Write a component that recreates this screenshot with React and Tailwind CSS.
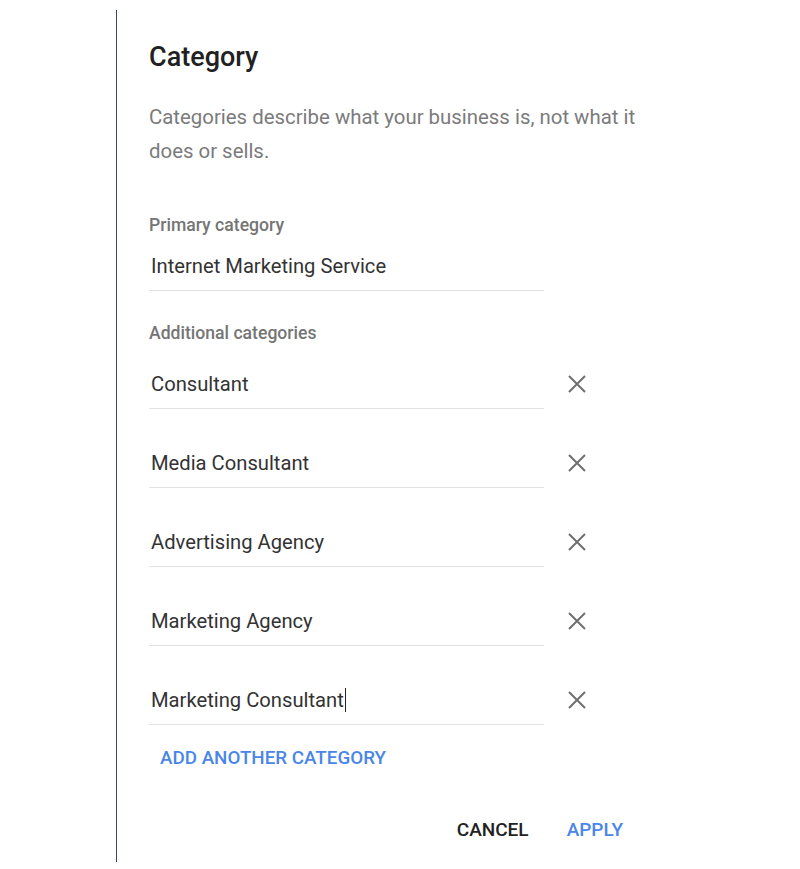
import React from "react";

function XIcon() {
  return (
    <svg width="20" height="20" viewBox="0 0 20 20" className="block">
      <path d="M2 2 L18 18 M18 2 L2 18" stroke="#6f6f6f" strokeWidth="2" fill="none" />
    </svg>
  );
}

function Row({ text, cursor, first }) {
  return (
    <div className={`flex items-start ${first ? "mt-[29px]" : "mt-[42px]"}`}>
      <div className="w-[395px] border-b border-[#e2e2e2] pb-[12px] pl-[2px]">
        <div className="text-[20.2px] leading-[24px] text-[#333] flex items-center">
          {text}
          {cursor && <span className="inline-block w-[1px] h-[24px] bg-[#222] ml-[1px]" />}
        </div>
      </div>
      <div className="ml-[23px] mt-[2px]">
        <XIcon />
      </div>
    </div>
  );
}

export default function App() {
  const rows = ["Consultant", "Media Consultant", "Advertising Agency", "Marketing Agency", "Marketing Consultant"];
  return (
    <div className="w-[800px] h-[869px] bg-white overflow-hidden" style={{ fontFamily: "Roboto, 'Noto Sans', sans-serif" }}>
      <div className="ml-[116px] mt-[10px] h-[852px] border-l-[1.5px] border-[#34495e] pl-[32px] pt-[31px]">
        <div className="text-[27px] leading-[32px] font-medium text-[#212121]">Category</div>
        <div className="mt-[27px] text-[20.4px] leading-[34px] text-[#7b7b7b] w-[510px]">
          Categories describe what your business is, not what it does or sells.
        </div>
        <div className="mt-[47px] text-[17.6px] leading-[20px] font-medium text-[#757575]">Primary category</div>
        <div className="mt-[19px] w-[395px] border-b border-[#e2e2e2] pb-[12px] pl-[2px]">
          <div className="text-[20.2px] leading-[24px] text-[#333]">Internet Marketing Service</div>
        </div>
        <div className="mt-[32px] text-[17.6px] leading-[20px] font-medium text-[#757575]">Additional categories</div>
        {rows.map((r, i) => (
          <Row key={r} text={r} first={i === 0} cursor={i === rows.length - 1} />
        ))}
        <div className="mt-[23px] ml-[11px] text-[18.8px] leading-[20px] font-medium text-[#4a86e8]">
          ADD ANOTHER CATEGORY
        </div>
        <div className="mt-[52px] flex w-[474px] justify-end gap-[38px] text-[19px] leading-[20px] font-medium">
          <span className="text-[#222]">CANCEL</span>
          <span className="text-[#4a86e8]">APPLY</span>
        </div>
      </div>
    </div>
  );
}
